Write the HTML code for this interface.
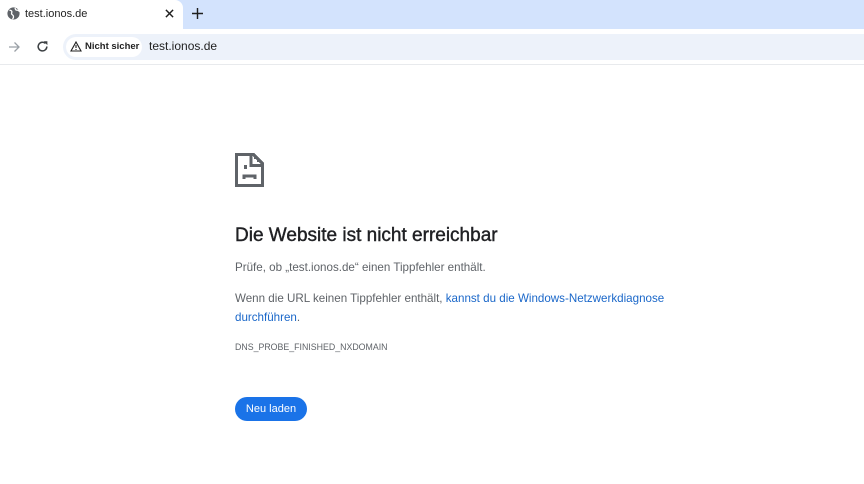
<!DOCTYPE html>
<html><head><meta charset="utf-8"><style>
*{margin:0;padding:0;box-sizing:border-box}
body{width:864px;height:484px;overflow:hidden;background:#fff;font-family:"Liberation Sans",sans-serif;position:relative;color:#1f1f1f}
.a{position:absolute;white-space:nowrap}
</style></head><body>
<div class="a" style="left:0;top:0;width:864px;height:29px;background:#d3e3fd"></div>
<div class="a" style="left:0;top:0;width:183px;height:29px;background:#fff;border-radius:0 8px 0 0"></div>
<svg class="a" style="left:7px;top:7px" width="13" height="13" viewBox="0 0 16 16"><circle cx="8" cy="8" r="7.5" fill="#5f6368"/><path d="M3 4c2 0 3 1 3 2s-1 2 0 3 2 1 2 3-1 2-1 3M10 1c0 2 1 3 3 3s2 1 2 2" stroke="#fff" stroke-width="1.6" fill="none"/></svg>
<div class="a" style="left:25px;top:8px;font-size:11px;color:#1f1f1f">test.ionos.de</div>
<svg class="a" style="left:165px;top:9px" width="9" height="9" viewBox="0 0 10 10"><path d="M1 1L9 9M9 1L1 9" stroke="#1f1f1f" stroke-width="1.6"/></svg>
<svg class="a" style="left:192px;top:8px" width="11" height="11" viewBox="0 0 10 10"><path d="M5 0V10M0 5H10" stroke="#1f1f1f" stroke-width="1.3"/></svg>
<div class="a" style="left:0;top:64px;width:864px;height:1px;background:#e8eaed"></div>
<svg class="a" style="left:8px;top:41px" width="12" height="12" viewBox="0 0 12 12"><path d="M1 6H11M6.5 1.5L11 6 6.5 10.5" stroke="#9aa0a6" stroke-width="1.3" fill="none"/></svg>
<svg class="a" style="left:36px;top:40px" width="13" height="13" viewBox="0 0 12 12"><path d="M10 6A4 4 0 1 1 8.8 3.2" stroke="#3c4043" stroke-width="1.4" fill="none"/><path d="M7 1.2H10.5V4.7Z" fill="#3c4043"/></svg>
<div class="a" style="left:63px;top:34px;width:801px;height:26px;background:#edf2fa;border-radius:13px 0 0 13px"></div>
<div class="a" style="left:66px;top:37px;width:76px;height:20px;background:#fff;border-radius:10px"></div>
<svg class="a" style="left:70px;top:41px" width="12" height="11" viewBox="0 0 12 11"><path d="M6 1L11 10H1Z" stroke="#1f1f1f" stroke-width="1.1" fill="none"/><path d="M6 4V7M6 8V9" stroke="#1f1f1f" stroke-width="1.1"/></svg>
<div class="a" style="left:85px;top:41px;font-size:9.5px;font-weight:bold;color:#1f1f1f">Nicht sicher</div>
<div class="a" style="left:149px;top:39px;font-size:12px;color:#1f1f1f">test.ionos.de</div>
<svg class="a" style="left:235px;top:153px" width="29" height="34" viewBox="0 0 29 34" shape-rendering="crispEdges"><path d="M1.5 1.5H18.5L27.5 10.5V32.5H1.5Z" stroke="#5f6368" stroke-width="3" fill="none"/><path d="M16 1.5V12.5H27.5" stroke="#5f6368" stroke-width="3" fill="none"/><rect x="9" y="12" width="3" height="4" fill="#5f6368"/><rect x="19" y="3" width="3" height="3" fill="#5f6368"/><rect x="22" y="6" width="3" height="3" fill="#5f6368"/><path d="M9 26V23H20V26" stroke="#5f6368" stroke-width="3" fill="none"/></svg>
<div class="a" style="left:235px;top:225px;font-size:19px;color:#202124;-webkit-text-stroke:0.4px #202124">Die Website ist nicht erreichbar</div>
<div class="a" style="left:235px;top:261px;font-size:11.6px;color:#5f6368">Prüfe, ob „test.ionos.de“ einen Tippfehler enthält.</div>
<div class="a" style="left:235px;top:292px;font-size:11.6px;color:#5f6368">Wenn die URL keinen Tippfehler enthält, <span style="color:#1a67c9">kannst du die Windows-Netzwerkdiagnose</span></div>
<div class="a" style="left:235px;top:311px;font-size:11.6px;color:#1a67c9">durchführen<span style="color:#5f6368">.</span></div>
<div class="a" style="left:235px;top:342px;font-size:8.8px;color:#5f6368">DNS_PROBE_FINISHED_NXDOMAIN</div>
<div class="a" style="left:235px;top:397px;width:72px;height:24px;background:#1a73e8;border-radius:12px;color:#fff;font-size:11px;text-align:center;line-height:24px">Neu laden</div>
</body></html>
